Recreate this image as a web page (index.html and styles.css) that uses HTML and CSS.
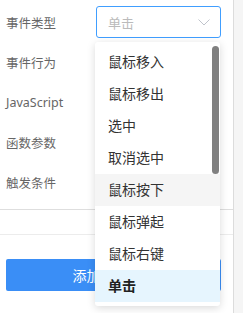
FILE: index.html
```html
<!DOCTYPE html>
<html lang="zh-CN">
<head>
  <meta charset="UTF-8">
  <meta name="viewport" content="width=device-width, initial-scale=1.0">
  <title>事件配置</title>
  <link rel="stylesheet" href="styles.css">
</head>
<body>
  <div class="page">
    <div class="panel">
      <!-- 表单 -->
      <div class="form">
        <div class="form-item">
          <label>事件类型</label>
          <div class="select focus">
            <span class="placeholder">单击</span>
            <svg class="arrow" width="12" height="7" viewBox="0 0 12 7">
              <path d="M0.5 0.5 L6 6 L11.5 0.5" fill="none" stroke="#c0c4cc" stroke-width="1"/>
            </svg>
          </div>
        </div>
        <div class="form-item"><label>事件行为</label></div>
        <div class="form-item"><label>JavaScript</label></div>
        <div class="form-item"><label>函数参数</label></div>
        <div class="form-item"><label>触发条件</label></div>
      </div>
      <div class="divider"></div>
      <div class="footer">
        <button class="btn">添加事件</button>
      </div>

      <!-- 下拉菜单 -->
      <div class="dropdown">
        <ul class="options">
          <li>鼠标移入</li>
          <li>鼠标移出</li>
          <li>选中</li>
          <li>取消选中</li>
          <li class="hover">鼠标按下</li>
          <li>鼠标弹起</li>
          <li>鼠标右键</li>
          <li class="selected">单击</li>
        </ul>
        <div class="scrollbar"></div>
      </div>
    </div>
    <div class="side"></div>
  </div>
</body>
</html>
```

FILE: styles.css
```css
body {
  margin: 0;
  padding: 0;
  background: #fff;
  font-family: "Noto Sans", "Noto Sans CJK SC", sans-serif;
  color: #333;
}
.page {
  display: flex;
  height: 313px;
}
.panel {
  position: relative;
  width: 233px;
  border-right: 1px solid #dcdcdc;
}
.side {
  flex: 1;
  background: #f5f5f5;
}
.form {
  padding: 6px 12px 0 6px;
  border-bottom: 1px solid #dedede;
  height: 210px;
  box-sizing: border-box;
}
.form-item {
  display: flex;
  align-items: center;
  height: 32px;
  margin-bottom: 8px;
}
.form-item label {
  width: 90px;
  font-size: 12.5px;
  color: #666;
}
.select {
  flex: 1;
  height: 32px;
  box-sizing: border-box;
  border: 1px solid #ddd;
  border-radius: 3px;
  display: flex;
  align-items: center;
  justify-content: space-between;
  padding: 0 10px 0 11px;
}
.select.focus {
  border-color: #409eff;
}
.placeholder {
  font-size: 13px;
  color: #bbb;
}
.divider {
  height: 24px;
  border-bottom: 1px solid #ececec;
}
.footer {
  padding: 24px 12px 0 6px;
}
.btn {
  display: block;
  width: 100%;
  height: 32px;
  padding: 0 26px 0 0;
  border: none;
  border-radius: 2px;
  background: #3a8ef6;
  color: #fff;
  font-family: inherit;
  font-size: 14px;
}
.dropdown {
  position: absolute;
  left: 95px;
  top: 42px;
  width: 125px;
  height: 264px;
  background: #fff;
  border-radius: 3px;
  box-shadow: 0 2px 8px rgba(0, 0, 0, 0.15);
  overflow: hidden;
}
.options {
  list-style: none;
  margin: 0;
  padding: 4px 0;
}
.options li {
  height: 32px;
  line-height: 32px;
  padding-left: 13px;
  font-size: 14px;
  color: #333;
}
.options li.hover {
  background: #f5f5f5;
}
.options li.selected {
  background: #e6f5fe;
  font-weight: bold;
  color: #222;
}
.scrollbar {
  position: absolute;
  right: 1px;
  top: 4px;
  width: 7px;
  height: 128px;
  border-radius: 4px;
  background: #808080;
}
```
